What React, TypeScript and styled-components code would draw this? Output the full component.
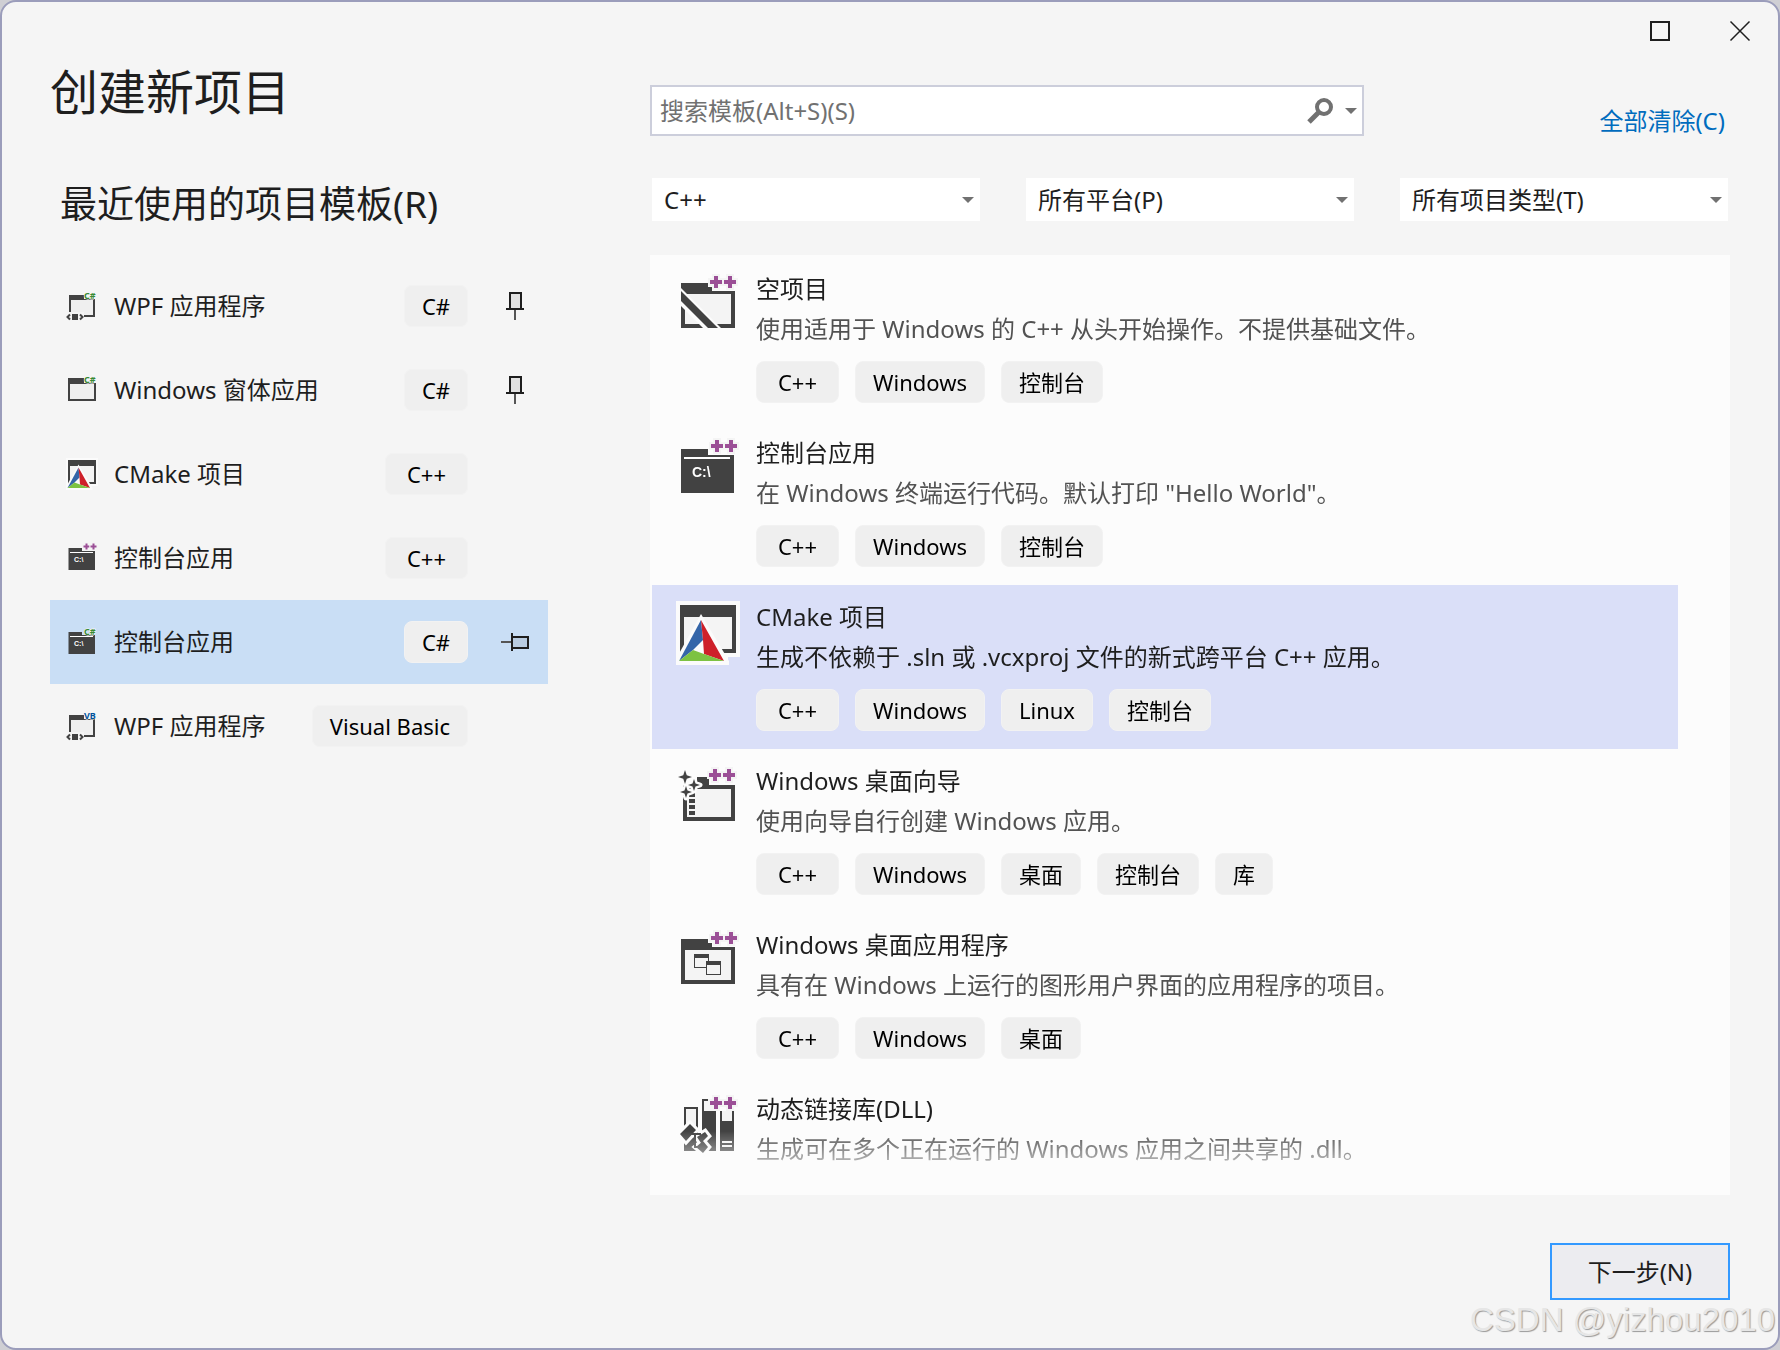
import React from "react";
import styled, { createGlobalStyle, css } from "styled-components";

const ink = "#1e1e1e";
const iconInk = "#424242";
const iconFill = "#f4f4f4";

const GlobalStyle = createGlobalStyle`
  *, *::before, *::after { box-sizing: border-box; }
  body {
    margin: 0;
    background: #cfcfd4;
    color: ${ink};
    font-family: "Noto Sans", "Noto Sans CJK SC", sans-serif;
    font-size: 24px;
    line-height: 32px;
  }
  button, input, select { font: inherit; color: inherit; }
`;

const Window = styled.div`
  position: relative;
  display: flex;
  flex-direction: column;
  height: 100vh;
  min-height: 640px;
  overflow: hidden;
  border: 2px solid #9b9dbb;
  border-radius: 16px;
  background: #f5f5f5;
`;

const TitleBar = styled.header`
  display: flex;
  justify-content: flex-end;
  gap: 4px;
  height: 58px;
  flex: none;
`;

const PlainButton = styled.button`
  display: flex;
  align-items: center;
  justify-content: center;
  padding: 0;
  border: 0;
  background: transparent;
  cursor: pointer;
`;

const CaptionButton = styled(PlainButton)`
  width: 76px;
`;

const Content = styled.main`
  display: grid;
  grid-template-columns: minmax(0, 498fr) minmax(0, 1080fr);
  grid-template-rows: minmax(0, 1fr);
  column-gap: 102px;
  flex: 1;
  min-height: 0;
  padding: 0 48px;
`;

const Column = styled.section`
  display: flex;
  flex-direction: column;
  min-height: 0;
`;

const Title = styled.h1`
  margin: 0;
  font-size: 48px;
  line-height: 64px;
  font-weight: 400;
`;

const Subtitle = styled.h2`
  margin: 52px 0 32px;
  padding-left: 10px;
  font-size: 37px;
  line-height: 56px;
  font-weight: 400;
`;

const List = styled.ul`
  margin: 0;
  padding: 0;
  list-style: none;
`;

const RecentRow = styled.li<{ $selected?: boolean }>`
  display: flex;
  align-items: stretch;
  height: 84px;
  background: ${(p) => (p.$selected ? "#c9def5" : "transparent")};
`;

const RecentMain = styled(PlainButton)`
  flex: 1;
  gap: 16px;
  min-width: 0;
  padding-left: 16px;
  text-align: left;
`;

const RecentName = styled.span`
  flex: 1;
  white-space: nowrap;
`;

const PinSlot = styled.div`
  display: flex;
  align-items: center;
  justify-content: center;
  width: 80px;
  padding-left: 14px;
`;

const PinButton = styled(PlainButton)`
  width: 40px;
  height: 40px;
`;

const Tag = styled.span`
  display: inline-flex;
  align-items: center;
  justify-content: center;
  height: 42px;
  padding: 0 17px;
  border: 1px solid #f2f2f2;
  border-radius: 8px;
  background: #efefef;
  color: #000;
  font-size: 22px;
  white-space: nowrap;
`;

const WideTag = styled(Tag)`
  min-width: 83px;
`;

const SearchRow = styled.div`
  display: flex;
  align-items: flex-start;
  justify-content: space-between;
  padding-top: 25px;
`;

const SearchBox = styled.form`
  display: flex;
  align-items: center;
  flex: 0 1 714px;
  height: 51px;
  padding: 0 0 0 8px;
  border: 2px solid #cccedb;
  background: #fff;
`;

const SearchInput = styled.input`
  flex: 1;
  min-width: 0;
  padding: 0;
  border: 0;
  outline: 0;
  background: transparent;
  &::placeholder { color: #717171; opacity: 1; }
`;

const SearchButton = styled(PlainButton)`
  width: 40px;
  height: 40px;
`;

const HistoryButton = styled(PlainButton)`
  width: 22px;
  height: 40px;
`;

const ClearLink = styled.a`
  margin: 20px 5px 0 0;
  color: #006cbe;
  text-decoration: none;
`;

const Filters = styled.div`
  display: grid;
  grid-template-columns: repeat(3, 1fr);
  gap: 46px;
  margin: 41px 2px 34px;
`;

const FilterBox = styled.label`
  display: grid;
  align-items: center;
  background: #fff;
  > * { grid-area: 1 / 1; }
  > svg { justify-self: end; margin-right: 6px; pointer-events: none; }
`;

const FilterSelect = styled.select`
  appearance: none;
  width: 100%;
  height: 43px;
  padding: 0 24px 0 12px;
  border: 0;
  border-radius: 0;
  background: transparent;
`;

const Panel = styled.div`
  flex: 1;
  min-height: 0;
  overflow: hidden;
  padding: 2px 52px 0 2px;
  background: #fcfcfc;
`;

const PanelScroll = styled.div`
  height: 100%;
  overflow: hidden;
  mask-image: linear-gradient(to top, transparent 10px, #000 64px);
`;

const TemplateRow = styled.li<{ $selected?: boolean }>`
  display: flex;
  align-items: flex-start;
  gap: 16px;
  height: 164px;
  padding: 16px 24px;
  ${(p) =>
    p.$selected &&
    css`
      background: #dadff8;
    `}
`;

const TemplateText = styled.div`
  flex: 1;
  min-width: 0;
`;

const TemplateName = styled.h3`
  margin: 0 0 8px;
  font-size: 24px;
  line-height: 32px;
  font-weight: 400;
`;

const TemplateDescription = styled.p<{ $selected?: boolean }>`
  margin: 0 0 16px;
  line-height: 32px;
  color: ${(p) => (p.$selected ? ink : "#525252")};
`;

const Tags = styled.div`
  display: flex;
  gap: 16px;
`;

const Footer = styled.footer`
  display: flex;
  justify-content: flex-end;
  flex: none;
  padding: 48px;
`;

const NextButton = styled.button`
  width: 180px;
  height: 57px;
  padding: 0;
  border: 2px solid #3399ff;
  background: #ececf0;
`;

const Watermark = styled.div`
  position: absolute;
  right: 3px;
  bottom: 8px;
  color: #e6e6e6;
  font-family: "Liberation Sans", Arial, sans-serif;
  font-size: 33px;
  line-height: 40px;
  text-shadow: 1px 1px 1px #9a9a9a;
  pointer-events: none;
`;

const Drawing = styled.svg`
  display: block;
  flex: none;
  overflow: visible;
`;

type Lang = "++" | "C#" | "VB";
type Kind = "empty" | "console" | "cmake" | "wizard" | "desktop" | "dll" | "wpf" | "forms";

const Plus = ({ x, y }: { x: number; y: number }) => (
  <path
    d={`M${x + 4} ${y}h4v4h4v4h-4v4h-4v-4h-4v-4h4z`}
    fill="#9b4f96"
    stroke={iconFill}
    strokeWidth="4"
    paintOrder="stroke"
  />
);

const LangMark = ({ lang, x = 35, y = 3 }: { lang: Lang; x?: number; y?: number }) =>
  lang === "++" ? (
    <g>
      <Plus x={x} y={y} />
      <Plus x={x + 14} y={y} />
    </g>
  ) : (
    <text
      x="36"
      y="18"
      fontFamily="Noto Sans, sans-serif"
      fontSize="18"
      fontWeight="700"
      fill={lang === "C#" ? "#388a34" : "#00539c"}
      stroke={iconFill}
      strokeWidth="2"
      paintOrder="stroke"
    >
      {lang}
    </text>
  );

const star = (cx: number, cy: number, r: number) => {
  const q = r / 4;
  return `M${cx} ${cy - r}L${cx + q} ${cy - q}L${cx + r} ${cy}L${cx + q} ${cy + q}L${cx} ${cy + r}L${cx - q} ${cy + q}L${cx - r} ${cy}L${cx - q} ${cy - q}z`;
};

const drawings: Record<Kind, (lang: Lang) => React.ReactNode> = {
  empty: (lang) => (
    <>
      <path d="M5 10h27v4h4v4h23v37H5z" fill={iconInk} />
      <path d="M9 21h46v30H9z" fill={iconFill} />
      <path d="M4 14L46 56H28L4 32z" fill="#fcfcfc" />
      <path d="M5 18L42 55H32L5 28z" fill={iconInk} />
      <LangMark lang={lang} x={34} />
    </>
  ),
  console: (lang) => (
    <>
      <path d="M5 12h27v6h26v38H5z" fill={iconInk} />
      <path d="M8 20h46v2H8z" fill="#fff" />
      <text x="16" y="40" fontFamily="Liberation Sans, sans-serif" fontSize="14" fontWeight="700" fill="#fff">
        C:\
      </text>
      <LangMark lang={lang} />
    </>
  ),
  cmake: () => (
    <>
      <path d="M0 0h64v56H52v8H0z" fill="#fbfbfb" />
      <path d="M4 4h56v48H4z" fill={iconInk} />
      <path d="M8 16h48v32H8z" fill={iconFill} />
      <path d="M25 13L53 60v4H0v-6z" fill="#fbfbfb" />
      <path d="M25 19L3 60L17 49L27 39z" fill="#3465a8" />
      <path d="M25 19L48 60L28 53L27 39z" fill="#ce202a" />
      <path d="M3 60L17 49L28 53L48 60z" fill="#7dc242" />
    </>
  ),
  wizard: (lang) => (
    <>
      <path d="M7 20h52v36H7z" fill={iconInk} />
      <path d="M21 12h12v10H21z" fill={iconInk} />
      <path d="M11 24h44v28H11z" fill={iconFill} />
      <path d="M13 28h6v4h-6zM13 34h6v4h-6zM13 40h6v4h-6zM13 46h6v4h-6z" fill={iconInk} />
      <path
        d={star(9, 12, 7) + star(18, 20, 6) + star(10, 27, 6)}
        fill={iconInk}
        stroke="#fcfcfc"
        strokeWidth="5"
        strokeLinejoin="round"
        paintOrder="stroke"
      />
      <LangMark lang={lang} x={33} y={4} />
    </>
  ),
  desktop: (lang) => (
    <>
      <path d="M5 10h27v4h4v4h23v37H5z" fill={iconInk} />
      <path d="M9 21h46v30H9z" fill={iconFill} />
      <path d="M18 25h15v14H18z" fill={iconInk} />
      <path d="M19 29h13v9H19z" fill={iconFill} />
      <path d="M30 32h15v14H30z" fill={iconInk} />
      <path d="M31 36h13v9H31z" fill={iconFill} />
      <LangMark lang={lang} />
    </>
  ),
  dll: (lang) => (
    <>
      <path d="M8 14h14v44H8z" fill={iconInk} />
      <path d="M10 16h10v17H10z" fill={iconFill} />
      <path d="M26 6h14v52H26z" fill={iconInk} />
      <path d="M28 8h12v10H28z" fill={iconFill} />
      <path d="M44 18h14v40H44z" fill={iconInk} />
      <path d="M46 18h10v10H46zM46 48h10v2H46zM46 52h10v2H46z" fill={iconFill} />
      <path
        d="M4 41L14 31L20 37L10 48zM21 44L29 39L32 43L25 50zM20 54L27 48L32 54L27 60z"
        fill={iconInk}
        stroke="#fcfcfc"
        strokeWidth="6"
        paintOrder="stroke"
      />
      <path d="M14 40h11v2h-5v11h4v2h-6V42h-4z" fill={iconInk} />
      <LangMark lang={lang} x={34} y={4} />
    </>
  ),
  wpf: (lang) => (
    <>
      <path d="M6 10h52v44H6z" fill={iconInk} />
      <path d="M10 20h44v30H10z" fill="#efefef" />
      <path d="M36 8h24v10H36zM2 44h34v18H2z" fill="#f5f5f5" />
      <path d="M12 48h12v12H12z" fill={iconInk} />
      <path d="M8 49L3 54L8 59M28 49L33 54L28 59" fill="none" stroke={iconInk} strokeWidth="4" />
      <LangMark lang={lang} />
    </>
  ),
  forms: (lang) => (
    <>
      <path d="M4 8h32v10h24v36H4z" fill={iconInk} />
      <path d="M8 20h48v30H8z" fill="#efefef" />
      <LangMark lang={lang} />
    </>
  ),
};

const TemplateIcon = ({ kind, lang, size }: { kind: Kind; lang: Lang; size: number }) => (
  <Drawing width={size} height={size} viewBox="0 0 64 64" aria-hidden="true">
    {drawings[kind](lang)}
  </Drawing>
);

const Caret = () => (
  <Drawing width="12" height="6" viewBox="0 0 12 6" aria-hidden="true">
    <path d="M0 0h12L6 6z" fill="#717171" />
  </Drawing>
);

const Pin = ({ pinned }: { pinned: boolean }) => (
  <Drawing width="28" height="28" viewBox="0 0 28 28" aria-hidden="true">
    <g transform={pinned ? undefined : "rotate(90 14 14)"}>
      <path d="M9 1h11v16H9z" fill="#000" fillOpacity="0.08" stroke={ink} strokeWidth="2" />
      <path d="M5 16h18v2H5z" fill={ink} />
      <path d="M13 18h2v10h-2z" fill="#555" />
    </g>
  </Drawing>
);

const TagItem = ({ text }: { text: string }) =>
  text === "C++" ? <WideTag>{text}</WideTag> : <Tag>{text}</Tag>;

interface Recent {
  name: string;
  tag: string;
  kind: Kind;
  lang: Lang;
  pin?: "pinned" | "unpinned";
  selected?: boolean;
}

const recents: Recent[] = [
  { name: "WPF 应用程序", tag: "C#", kind: "wpf", lang: "C#", pin: "pinned" },
  { name: "Windows 窗体应用", tag: "C#", kind: "forms", lang: "C#", pin: "pinned" },
  { name: "CMake 项目", tag: "C++", kind: "cmake", lang: "++" },
  { name: "控制台应用", tag: "C++", kind: "console", lang: "++" },
  { name: "控制台应用", tag: "C#", kind: "console", lang: "C#", pin: "unpinned", selected: true },
  { name: "WPF 应用程序", tag: "Visual Basic", kind: "wpf", lang: "VB" },
];

interface Template {
  name: string;
  description: string;
  tags: string[];
  kind: Kind;
  selected?: boolean;
}

const templates: Template[] = [
  {
    name: "空项目",
    description: "使用适用于 Windows 的 C++ 从头开始操作。不提供基础文件。",
    tags: ["C++", "Windows", "控制台"],
    kind: "empty",
  },
  {
    name: "控制台应用",
    description: '在 Windows 终端运行代码。默认打印 "Hello World"。',
    tags: ["C++", "Windows", "控制台"],
    kind: "console",
  },
  {
    name: "CMake 项目",
    description: "生成不依赖于 .sln 或 .vcxproj 文件的新式跨平台 C++ 应用。",
    tags: ["C++", "Windows", "Linux", "控制台"],
    kind: "cmake",
    selected: true,
  },
  {
    name: "Windows 桌面向导",
    description: "使用向导自行创建 Windows 应用。",
    tags: ["C++", "Windows", "桌面", "控制台", "库"],
    kind: "wizard",
  },
  {
    name: "Windows 桌面应用程序",
    description: "具有在 Windows 上运行的图形用户界面的应用程序的项目。",
    tags: ["C++", "Windows", "桌面"],
    kind: "desktop",
  },
  {
    name: "动态链接库(DLL)",
    description: "生成可在多个正在运行的 Windows 应用之间共享的 .dll。",
    tags: [],
    kind: "dll",
  },
];

const filters = [
  { id: "language", label: "语言", value: "C++" },
  { id: "platform", label: "平台", value: "所有平台(P)" },
  { id: "type", label: "项目类型", value: "所有项目类型(T)" },
];

export default function App() {
  return (
    <>
      <GlobalStyle />
      <Window lang="zh-CN">
        <TitleBar>
          <CaptionButton type="button" aria-label="最大化">
            <Drawing width="20" height="20" viewBox="0 0 20 20" aria-hidden="true">
              <path d="M1 1h18v18H1z" fill="none" stroke={ink} strokeWidth="2" />
            </Drawing>
          </CaptionButton>
          <CaptionButton type="button" aria-label="关闭">
            <Drawing width="20" height="20" viewBox="0 0 20 20" aria-hidden="true">
              <path d="M0.5 0.5l19 19M19.5 0.5l-19 19" stroke={ink} strokeWidth="1.5" />
            </Drawing>
          </CaptionButton>
        </TitleBar>
        <Content>
          <Column>
            <Title>创建新项目</Title>
            <Subtitle>最近使用的项目模板(R)</Subtitle>
            <List>
              {recents.map((item, i) => (
                <RecentRow key={i} $selected={item.selected}>
                  <RecentMain type="button">
                    <TemplateIcon kind={item.kind} lang={item.lang} size={32} />
                    <RecentName>{item.name}</RecentName>
                    <TagItem text={item.tag} />
                  </RecentMain>
                  <PinSlot>
                    {item.pin && (
                      <PinButton type="button" aria-label={item.pin === "pinned" ? "取消固定" : "固定"}>
                        <Pin pinned={item.pin === "pinned"} />
                      </PinButton>
                    )}
                  </PinSlot>
                </RecentRow>
              ))}
            </List>
          </Column>
          <Column>
            <SearchRow>
              <SearchBox role="search" onSubmit={(e) => e.preventDefault()}>
                <SearchInput type="text" aria-label="搜索模板" placeholder="搜索模板(Alt+S)(S)" />
                <SearchButton type="submit" aria-label="搜索">
                  <Drawing width="26" height="26" viewBox="0 0 26 26" aria-hidden="true">
                    <circle cx="17" cy="9" r="7" fill="none" stroke="#717171" strokeWidth="4" />
                    <path d="M12 14L2 24" stroke="#717171" strokeWidth="5" />
                  </Drawing>
                </SearchButton>
                <HistoryButton type="button" aria-label="搜索历史">
                  <Caret />
                </HistoryButton>
              </SearchBox>
              <ClearLink href="#clear">全部清除(C)</ClearLink>
            </SearchRow>
            <Filters>
              {filters.map((f) => (
                <FilterBox key={f.id} htmlFor={f.id}>
                  <FilterSelect id={f.id} aria-label={f.label} defaultValue={f.value}>
                    <option>{f.value}</option>
                  </FilterSelect>
                  <Caret />
                </FilterBox>
              ))}
            </Filters>
            <Panel>
              <PanelScroll>
                <List>
                  {templates.map((t) => (
                    <TemplateRow key={t.name} $selected={t.selected}>
                      <TemplateIcon kind={t.kind} lang="++" size={64} />
                      <TemplateText>
                        <TemplateName>{t.name}</TemplateName>
                        <TemplateDescription $selected={t.selected}>{t.description}</TemplateDescription>
                        <Tags>
                          {t.tags.map((tag) => (
                            <TagItem key={tag} text={tag} />
                          ))}
                        </Tags>
                      </TemplateText>
                    </TemplateRow>
                  ))}
                </List>
              </PanelScroll>
            </Panel>
          </Column>
        </Content>
        <Footer>
          <NextButton type="button">下一步(N)</NextButton>
        </Footer>
        <Watermark>CSDN @yizhou2010</Watermark>
      </Window>
    </>
  );
}
